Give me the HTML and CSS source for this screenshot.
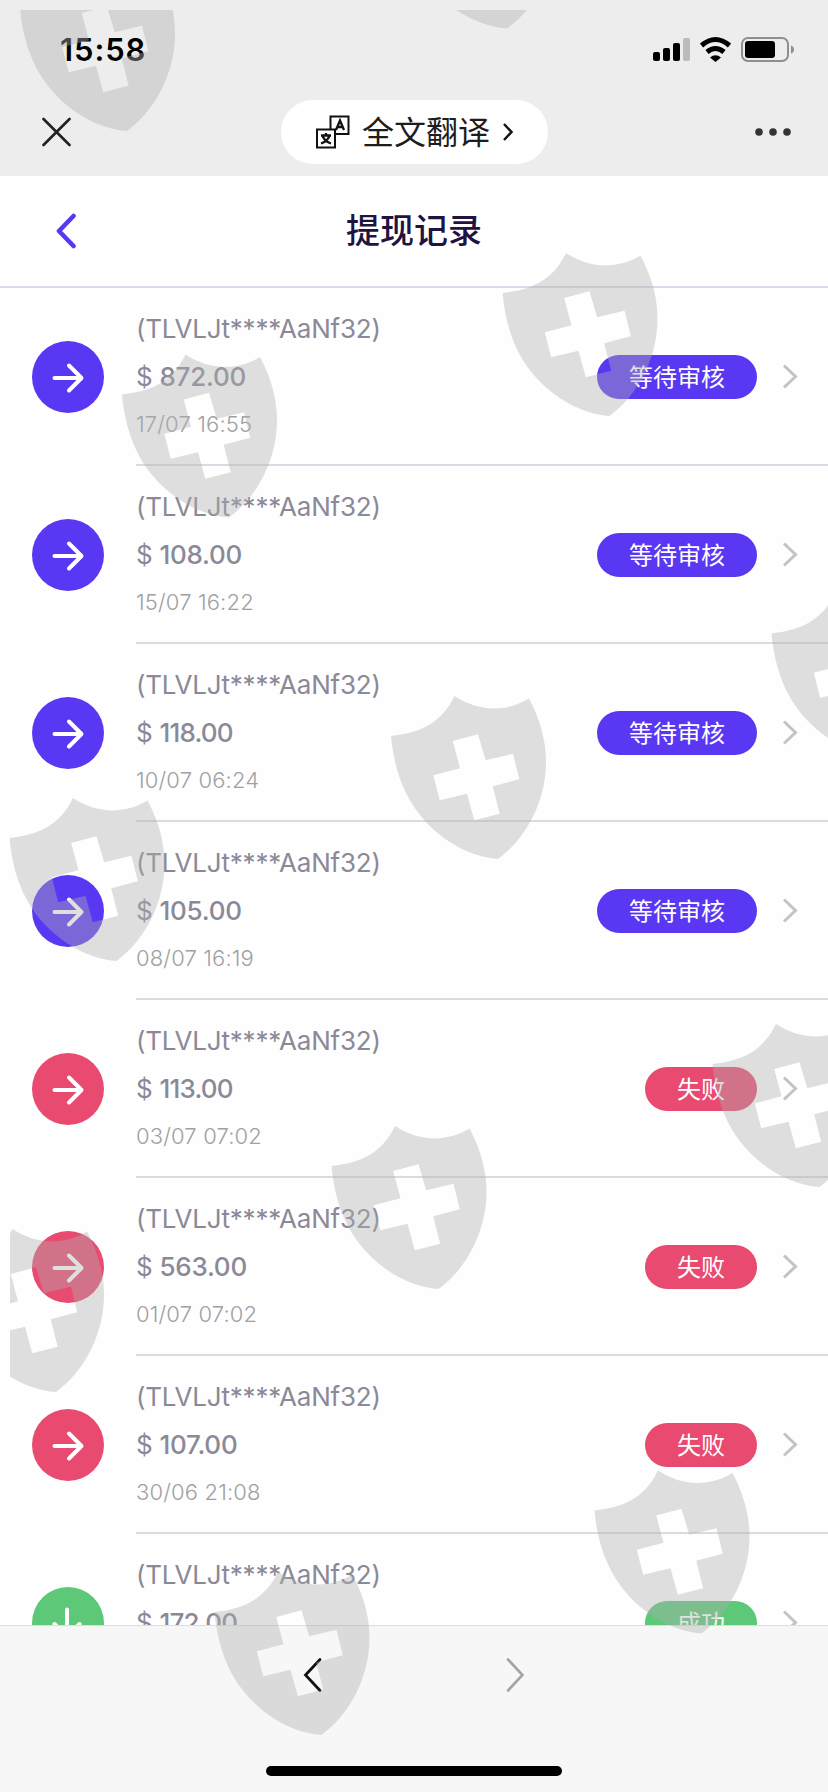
FILE: index.html
```
<!DOCTYPE html>
<html lang="zh-CN">
<head>
<meta charset="utf-8">
<title>提现记录</title>
<link rel="stylesheet" href="styles.css">
</head>
<body>
<svg class="defs" aria-hidden="true">
  <symbol id="shield" viewBox="0 0 156 164" overflow="visible">
    <path fill-rule="evenodd" d="M0 40C28 37 50 28 63.500 0C85 14 112 18 138 2.500C151 27 155 48 155 66C155 104 136 142 107 163C79 161 52 145 34 125C13 102 3 73 0 40ZM61.700 45L87 38.300L94.700 64.300L122 57.700L128.300 83.300L101.700 90.300L108.700 117.700L83.300 124.300L76 97.700L48.700 104.300L42.300 79.300L69 72.300Z"/>
  </symbol>
  <symbol id="arrow" viewBox="0 0 72 72">
    <path d="M22.500 37H49M37 24.500L49.500 37L37 49.500" fill="none" stroke="#fff" stroke-width="4" stroke-linecap="round" stroke-linejoin="round"/>
  </symbol>
  <symbol id="more" viewBox="0 0 16 26">
    <path d="M2 1.500L13.500 12.500L2 23.500" fill="none" stroke="#c3c3c3" stroke-width="3"/>
  </symbol>
</svg>
<div class="screen">
  <header class="top">
    <div class="status">
      <span class="time">15:58</span>
      <svg width="144" height="28" viewBox="652 36 144 28">
        <rect x="653" y="52" width="7" height="9" rx="2"/><rect x="663" y="48" width="7" height="13" rx="2"/><rect x="673" y="43" width="7" height="18" rx="2"/><rect x="683" y="38" width="7" height="23" rx="2" fill="#bbb"/>
        <path d="M701.500 45.500Q715.500 33.500 729.500 45.500M707 52Q715.500 45 724 52" fill="none" stroke="#000" stroke-width="5"/>
        <path d="M710 57.500Q715.500 53 721 57.500L715.500 62Z"/>
        <rect x="742" y="38" width="46" height="23" rx="6" fill="none" stroke="#8f8f8f" stroke-width="2"/>
        <rect x="745" y="41" width="30" height="17" rx="3"/>
        <path d="M791 45.500Q794 46.500 794 49.500T791 53.500Z" fill="#8f8f8f"/>
      </svg>
    </div>
    <div class="nav">
      <svg width="30" height="30" viewBox="0 0 30 30"><path d="M1.500 2L27.500 28M27.500 2L1.500 28" stroke="#222" stroke-width="2.600" stroke-linecap="round"/></svg>
      <div class="translate">
        <svg width="34" height="34" viewBox="0 0 34 34" fill="none" stroke="#111" stroke-width="2">
          <path d="M14.500 14V1.500H32.500V19H20"/><rect x="1" y="14.500" width="18" height="18"/>
          <path stroke-width="2.300" d="M20 15L24 5.500L28 15M21.500 12H26.500M10 18V20.500M5 20.500H15M6.500 21Q9 26.500 15 28.500M13.500 21Q11 26.500 5 28.500"/>
        </svg>
        <span>全文翻译</span>
        <svg class="go" width="10" height="18" viewBox="0 0 10 18"><path d="M1 1L8.500 9L1 17" fill="none" stroke="#111" stroke-width="2.400"/></svg>
      </div>
      <svg width="38" height="10" viewBox="0 0 38 10" fill="#333"><circle cx="5" cy="5" r="3.800"/><circle cx="19" cy="5" r="3.800"/><circle cx="33" cy="5" r="3.800"/></svg>
    </div>
  </header>
  <div class="title">
    <svg width="22" height="36" viewBox="0 0 22 36"><path d="M18.500 3L4 18L18.500 33" fill="none" stroke="#5838f2" stroke-width="4.600" stroke-linecap="round" stroke-linejoin="round"/></svg>
    <h1>提现记录</h1>
  </div>
  <main class="list">
    <div class="row pending"><svg class="icon"><use href="#arrow"/></svg><div class="body"><div class="info"><p class="addr">(TLVLJt****AaNf32)</p><p class="amount">$ <b>872.00</b></p><p class="date">17/07 16:55</p></div><span class="tag">等待审核</span><svg class="more"><use href="#more"/></svg></div></div>
    <div class="row pending"><svg class="icon"><use href="#arrow"/></svg><div class="body"><div class="info"><p class="addr">(TLVLJt****AaNf32)</p><p class="amount">$ <b>108.00</b></p><p class="date">15/07 16:22</p></div><span class="tag">等待审核</span><svg class="more"><use href="#more"/></svg></div></div>
    <div class="row pending"><svg class="icon"><use href="#arrow"/></svg><div class="body"><div class="info"><p class="addr">(TLVLJt****AaNf32)</p><p class="amount">$ <b class="tight">118.00</b></p><p class="date">10/07 06:24</p></div><span class="tag">等待审核</span><svg class="more"><use href="#more"/></svg></div></div>
    <div class="row pending"><svg class="icon"><use href="#arrow"/></svg><div class="body"><div class="info"><p class="addr">(TLVLJt****AaNf32)</p><p class="amount">$ <b>105.00</b></p><p class="date">08/07 16:19</p></div><span class="tag">等待审核</span><svg class="more"><use href="#more"/></svg></div></div>
    <div class="row failed"><svg class="icon"><use href="#arrow"/></svg><div class="body"><div class="info"><p class="addr">(TLVLJt****AaNf32)</p><p class="amount">$ <b class="tight">113.00</b></p><p class="date">03/07 07:02</p></div><span class="tag">失败</span><svg class="more"><use href="#more"/></svg></div></div>
    <div class="row failed"><svg class="icon"><use href="#arrow"/></svg><div class="body"><div class="info"><p class="addr">(TLVLJt****AaNf32)</p><p class="amount">$ <b>563.00</b></p><p class="date">01/07 07:02</p></div><span class="tag">失败</span><svg class="more"><use href="#more"/></svg></div></div>
    <div class="row failed"><svg class="icon"><use href="#arrow"/></svg><div class="body"><div class="info"><p class="addr">(TLVLJt****AaNf32)</p><p class="amount">$ <b>107.00</b></p><p class="date">30/06 21:08</p></div><span class="tag">失败</span><svg class="more"><use href="#more"/></svg></div></div>
    <div class="row success"><svg class="icon down"><use href="#arrow"/></svg><div class="body"><div class="info"><p class="addr">(TLVLJt****AaNf32)</p><p class="amount">$ <b class="tight">172.00</b></p></div><span class="tag">成功</span><svg class="more"><use href="#more"/></svg></div></div>
  </main>
  <footer class="bottom">
    <div class="history">
      <svg width="20" height="36" viewBox="0 0 20 36"><path d="M17 2.500L2.500 18L17 33.500" fill="none" stroke="#111" stroke-width="2.800" stroke-linecap="round"/></svg>
      <svg width="20" height="36" viewBox="0 0 20 36"><path d="M3 2.500L17.500 18L3 33.500" fill="none" stroke="#a5a5a5" stroke-width="2.600" stroke-linecap="round"/></svg>
    </div>
    <div class="home"></div>
  </footer>
  <svg class="marks" viewBox="10 10 818 1782">
    <use href="#shield" x="20" y="-32" width="156" height="164"/>
    <use href="#shield" x="400" y="-134.500" width="156" height="164"/>
    <use href="#shield" x="502.500" y="253" width="156" height="164"/>
    <use href="#shield" x="122" y="354.500" width="156" height="164"/>
    <use href="#shield" x="771.500" y="593.500" width="156" height="164"/>
    <use href="#shield" x="391" y="696" width="156" height="164"/>
    <use href="#shield" x="9.500" y="798" width="156" height="164"/>
    <use href="#shield" x="712.500" y="1024" width="156" height="164"/>
    <use href="#shield" x="331.500" y="1126" width="156" height="164"/>
    <use href="#shield" x="-51" y="1229" width="156" height="164"/>
    <use href="#shield" x="594.500" y="1470.500" width="156" height="164"/>
    <use href="#shield" x="214.500" y="1572" width="156" height="164"/>
  </svg>
</div>
</body>
</html>
```
FILE: styles.css
```
* { box-sizing: border-box; margin: 0; padding: 0; }
body { font-family: Inter, "Noto Sans CJK SC", sans-serif; background: #fefefe; }
svg { display: block; flex: none; }
.defs { position: absolute; width: 0; height: 0; }
.screen { position: relative; width: 828px; height: 1792px; overflow: hidden; display: flex; flex-direction: column; }
.top { height: 176px; flex: none; background: #ededed; }
.status { height: 100px; padding: 0 32px 0 60px; display: flex; justify-content: space-between; align-items: center; }
.time { font-size: 31px; font-weight: 600; line-height: 40px; letter-spacing: 0.9px; }
.nav { height: 64px; padding: 0 36px 0 42px; display: flex; align-items: center; }
.translate { width: 267px; height: 64px; margin-left: 209px; margin-right: auto; border-radius: 32px; background: #fff; display: flex; align-items: center; padding-left: 35px; font-size: 32px; line-height: 60px; color: #1d1d1d; font-family: "Noto Sans CJK SC", sans-serif; }
.translate span { height: 64px; margin-left: 12px; }
.translate .go { margin-left: 13px; }
.title { height: 112px; flex: none; border-bottom: 2px solid #dbdae9; display: grid; grid-template-columns: 1fr auto 1fr; align-items: center; padding: 0 55px; background: #fff; }
.title h1 { font: 500 34px/50px "Noto Sans CJK SC", sans-serif; padding-bottom: 4px; color: #21133f; }
.list { height: 1337px; flex: none; overflow: hidden; }
.row { height: 178px; padding-left: 32px; display: flex; align-items: center; }
.icon { width: 72px; height: 72px; border-radius: 50%; margin-right: 32px; }
.icon.down { transform: rotate(90deg); }
.body { flex: 1; height: 178px; border-bottom: 2px solid #dbdae4; display: flex; align-items: center; padding: 2px 30px 0 0; }
.info { flex: 1; align-self: flex-start; padding-top: 15px; color: #8b8998; white-space: nowrap; }
.info p { height: 48px; line-height: 48px; }
.addr { font-size: 26px; font-weight: 400; letter-spacing: -0.2px; }
.amount { font-size: 26px; letter-spacing: -0.25px; }
.amount b { font-weight: 500; }
.amount .tight { letter-spacing: -0.8px; }
.info .date { font-size: 22px; font-weight: 300; line-height: 46px; letter-spacing: 0.15px; color: #a0a0a3; }
.tag { height: 44px; border-radius: 22px; padding: 0 32px; font: 400 24px/41px "Noto Sans CJK SC", sans-serif; color: #fff; margin-right: 25px; }
.more { width: 16px; height: 26px; }
.pending .icon, .pending .tag { background: #5a38f3; }
.failed .icon, .failed .tag { background: #e94a70; }
.success .icon, .success .tag { background: #5dc978; }
.bottom { flex: 1; background: #f7f7f7; border-top: 1px solid #dedede; display: flex; flex-direction: column; justify-content: space-between; align-items: center; padding: 31px 0 16px; }
.history { display: flex; gap: 182px; }
.home { width: 296px; height: 10px; border-radius: 5px; background: #000; }
.marks { position: absolute; left: 10px; top: 10px; width: 818px; height: 1782px; overflow: hidden; fill: #afafaf; fill-opacity: .4; }
```
